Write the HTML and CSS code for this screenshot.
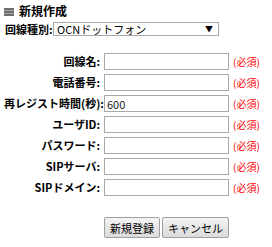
FILE: index.html
```html
<!DOCTYPE html>
<html lang="ja">
<head>
<meta charset="utf-8">
<link rel="stylesheet" href="styles.css">
</head>
<body>
<div class="page">
  <div class="title">
    <svg class="title-icon" width="10" height="8" viewBox="0 0 10 8">
      <rect x="0" y="0" width="10" height="8" fill="#a8a8a8"/>
      <rect x="0" y="0" width="10" height="2" fill="#6e6e6e"/>
      <rect x="0" y="3" width="10" height="2" fill="#6e6e6e"/>
      <rect x="0" y="6" width="10" height="2" fill="#6e6e6e"/>
    </svg>
    <span>新規作成</span>
  </div>
  <div class="type-row">
    <span class="type-label">回線種別:</span>
    <span class="select-wrap">
      <select class="select"><option>OCNドットフォン</option></select>
      <span class="select-arrow">▼</span>
    </span>
  </div>
  <div class="form">
    <label class="label">回線名:</label><input class="field" type="text"><span class="req">(必須)</span>
    <label class="label">電話番号:</label><input class="field" type="text"><span class="req">(必須)</span>
    <label class="label">再レジスト時間(秒):</label><input class="field" type="text" value="600"><span class="req">(必須)</span>
    <label class="label">ユーザID:</label><input class="field" type="text"><span class="req">(必須)</span>
    <label class="label">パスワード:</label><input class="field" type="password"><span class="req">(必須)</span>
    <label class="label">SIPサーバ:</label><input class="field" type="text"><span class="req">(必須)</span>
    <label class="label">SIPドメイン:</label><input class="field" type="text"><span class="req">(必須)</span>
    <div class="actions">
      <button class="btn" type="button">新規登録</button>
      <button class="btn" type="button">キャンセル</button>
    </div>
  </div>
</div>
</body>
</html>
```
FILE: styles.css
```css
html, body {
  margin: 0;
  padding: 0;
  background: #fff;
}
body {
  font-family: "Noto Sans CJK JP", "Liberation Sans", sans-serif;
  color: #000;
  width: 272px;
  height: 247px;
  overflow: hidden;
}
.page {
  padding: 2px 0 0 4px;
}
.title {
  display: flex;
  align-items: center;
  gap: 5px;
  height: 17px;
  font-size: 12px;
  font-weight: bold;
}
.title-icon {
  display: block;
  margin-top: 2px;
}
.type-row {
  display: flex;
  align-items: center;
  margin-top: 3px;
  height: 14px;
  padding-left: 1px;
}
.type-label {
  font-size: 11px;
  font-weight: bold;
  width: 48px;
  line-height: 14px;
}
.select-wrap {
  position: relative;
  display: block;
}
.select {
  appearance: none;
  -webkit-appearance: none;
  display: block;
  width: 166px;
  height: 14px;
  box-sizing: border-box;
  border: 1px solid #a9a9a9;
  border-radius: 0;
  background: #fff;
  font-family: inherit;
  font-size: 11px;
  line-height: 12px;
  padding: 0 0 0 3px;
  margin: 0;
  color: #000;
}
.select-arrow {
  position: absolute;
  right: 6px;
  top: 1px;
  font-size: 8px;
  line-height: 12px;
  pointer-events: none;
}
.form {
  display: grid;
  grid-template-columns: 96px 125px auto;
  column-gap: 4px;
  row-gap: 4px;
  margin-top: 17px;
  align-items: center;
}
.label {
  font-size: 11px;
  font-weight: bold;
  text-align: right;
  white-space: nowrap;
  line-height: 17px;
}
.field {
  width: 125px;
  height: 17px;
  box-sizing: border-box;
  border: 1px solid #a9a9a9;
  margin: 0;
  padding: 0 2px;
  font-family: inherit;
  font-size: 11px;
  color: #222;
  outline: none;
}
.req {
  color: #f00;
  font-size: 10px;
  line-height: 17px;
}
.actions {
  grid-column: 2 / 4;
  display: flex;
  gap: 2px;
  margin-top: 17px;
}
.btn {
  height: 21px;
  margin: 0;
  padding: 0 5px;
  font-family: inherit;
  font-size: 11px;
  color: #000;
  background: linear-gradient(#f4f4f4, #e6e6e6 50%, #dcdcdc);
  border: 1px solid #a0a0a0;
  border-radius: 2px;
}
```
